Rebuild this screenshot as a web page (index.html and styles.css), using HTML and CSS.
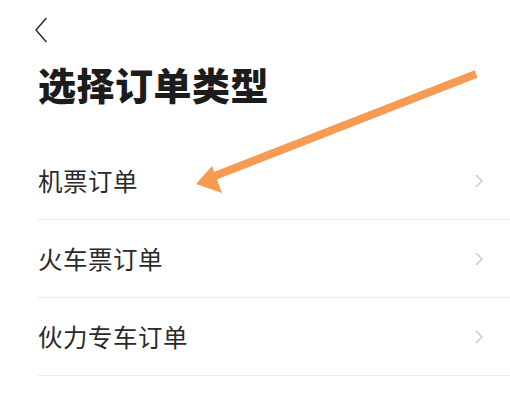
FILE: index.html
```html
<!DOCTYPE html>
<html lang="zh-CN">
<head>
<meta charset="utf-8">
<link rel="stylesheet" href="styles.css">
</head>
<body>
<div class="page">
  <div class="topbar">
    <svg class="back" width="14" height="26" viewBox="0 0 14 26"><polyline points="12,1.5 2,13 12,24.5" fill="none" stroke="#333" stroke-width="1.6" stroke-linecap="round" stroke-linejoin="round"/></svg>
  </div>
  <h1 class="title">选择订单类型</h1>
  <ul class="list">
    <li class="row"><span class="label">机票订单</span><svg class="chev" width="8" height="14" viewBox="0 0 8 14"><polyline points="1,1 7,7 1,13" fill="none" stroke="#c4c4c4" stroke-width="1.3"/></svg></li>
    <li class="row"><span class="label">火车票订单</span><svg class="chev" width="8" height="14" viewBox="0 0 8 14"><polyline points="1,1 7,7 1,13" fill="none" stroke="#c4c4c4" stroke-width="1.3"/></svg></li>
    <li class="row"><span class="label">伙力专车订单</span><svg class="chev" width="8" height="14" viewBox="0 0 8 14"><polyline points="1,1 7,7 1,13" fill="none" stroke="#c4c4c4" stroke-width="1.3"/></svg></li>
  </ul>
  <svg class="arrow" width="510" height="399" viewBox="0 0 510 399">
    <line x1="476" y1="74" x2="212" y2="177" stroke="#f79a52" stroke-width="8" stroke-linecap="butt"/>
    <polygon points="196,184 212,166 222,193" fill="#f79a52"/>
  </svg>
</div>
</body>
</html>
```
FILE: styles.css
```css
* { box-sizing: border-box; }
html, body { margin: 0; padding: 0; background: #fff; }
body {
  font-family: "Noto Sans CJK SC", "Noto Sans", sans-serif;
  color: #222;
}
.page {
  position: relative;
  width: 510px;
  height: 399px;
  overflow: hidden;
}
.topbar {
  height: 44px;
  padding: 17px 0 0 34px;
}
.back { display: block; }
.title {
  margin: 18px 0 0 38px;
  font-size: 38px;
  line-height: 44px;
  font-weight: 900;
  color: #1c1c1c;
  letter-spacing: 0.5px;
}
.list {
  list-style: none;
  margin: 36px 0 0 38px;
  padding: 0;
}
.row {
  display: flex;
  align-items: center;
  justify-content: space-between;
  height: 78px;
  padding-right: 27px;
  border-bottom: 1px solid #ececec;
}
.label {
  font-size: 24.5px;
  line-height: 30px;
  color: #2a2a2a;
  letter-spacing: 0.5px;
}
.chev { display: block; }
.arrow {
  position: absolute;
  left: 0;
  top: 0;
  pointer-events: none;
}
```
